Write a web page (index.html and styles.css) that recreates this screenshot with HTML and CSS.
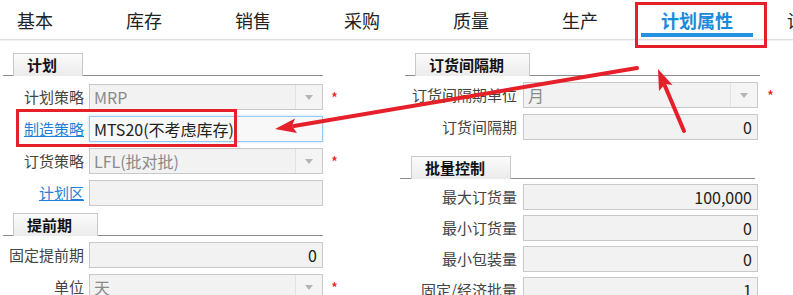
FILE: index.html
```html
<!DOCTYPE html>
<html lang="zh-CN">
<head>
  <meta charset="UTF-8">
  <title>计划属性</title>
  <link rel="stylesheet" href="styles.css">
</head>
<body>
  <div class="tabs">
    <span class="tab">基本</span>
    <span class="tab">库存</span>
    <span class="tab">销售</span>
    <span class="tab">采购</span>
    <span class="tab">质量</span>
    <span class="tab">生产</span>
    <span class="tab tab-active">计划属性</span>
    <span class="tab">设计</span>
  </div>

  <div class="main">
    <div class="col col-left">
      <div class="section">
        <div class="sec-head"><span class="sec-title">计划</span></div>
        <div class="rows rows-first">
          <div class="row">
            <span class="lbl">计划策略</span>
            <div class="field select"><span class="val">MRP</span><span class="drop"></span></div>
            <span class="req">*</span>
          </div>
          <div class="row">
            <a class="lbl link">制造策略</a>
            <div class="field focus"><span class="val">MTS20(不考虑库存)</span></div>
          </div>
          <div class="row">
            <span class="lbl">订货策略</span>
            <div class="field select"><span class="val">LFL(批对批)</span><span class="drop"></span></div>
            <span class="req">*</span>
          </div>
          <div class="row">
            <a class="lbl link">计划区</a>
            <div class="field"><span class="val"></span></div>
          </div>
        </div>
      </div>

      <div class="section section-next">
        <div class="sec-head"><span class="sec-title">提前期</span></div>
        <div class="rows">
          <div class="row">
            <span class="lbl">固定提前期</span>
            <div class="field num"><span class="val">0</span></div>
          </div>
          <div class="row">
            <span class="lbl">单位</span>
            <div class="field select"><span class="val">天</span><span class="drop"></span></div>
            <span class="req">*</span>
          </div>
        </div>
      </div>
    </div>

    <div class="col col-right">
      <div class="section">
        <div class="sec-head"><span class="sec-title">订货间隔期</span></div>
        <div class="rows">
          <div class="row">
            <span class="lbl">订货间隔期单位</span>
            <div class="field select"><span class="val">月</span><span class="drop"></span></div>
            <span class="req">*</span>
          </div>
          <div class="row">
            <span class="lbl">订货间隔期</span>
            <div class="field num"><span class="val">0</span></div>
          </div>
        </div>
      </div>

      <div class="section section-batch">
        <div class="sec-head"><span class="sec-title">批量控制</span></div>
        <div class="rows">
          <div class="row">
            <span class="lbl">最大订货量</span>
            <div class="field num"><span class="val">100,000</span></div>
          </div>
          <div class="row">
            <span class="lbl">最小订货量</span>
            <div class="field num"><span class="val">0</span></div>
          </div>
          <div class="row">
            <span class="lbl">最小包装量</span>
            <div class="field num"><span class="val">0</span></div>
          </div>
          <div class="row">
            <span class="lbl">固定/经济批量</span>
            <div class="field num"><span class="val">1</span></div>
          </div>
        </div>
      </div>
    </div>
  </div>

  <!-- annotation marks drawn over the screenshot -->
  <div class="mark mark-tab"></div>
  <div class="mark mark-field"></div>
  <svg class="arrows" width="793" height="295" viewBox="0 0 793 295">
    <line x1="637" y1="68" x2="294" y2="126" />
    <polygon points="275,129 295,118.5 292,126 297,133" />
    <line x1="684" y1="131" x2="665" y2="86" />
    <polygon points="658,69 672.5,85 665,84 659,91" />
  </svg>
</body>
</html>
```

FILE: styles.css
```css
body {
  margin: 0;
  width: 793px;
  height: 295px;
  overflow: hidden;
  position: relative;
  background: #fff;
  font-family: "Noto Sans CJK SC", sans-serif;
  color: #333;
}

/* tab strip */
.tabs {
  display: flex;
  height: 39px;
  padding-left: 17px;
  border-bottom: 1px solid #dedede;
  box-shadow: 0 1px 0 #f0f0f0;
  white-space: nowrap;
  overflow: hidden;
}

.tab {
  height: 33px;
  line-height: 40px;
  font-size: 18px;
  color: #222;
  flex-shrink: 0;
}

.tab + .tab {
  margin-left: 73px;
}

.tab.tab-active {
  margin-left: 43px;
  padding: 0 20px;
  color: #1b8ad9;
  font-weight: bold;
  border-bottom: 4px solid #2592e0;
}

.tab-active + .tab {
  margin-left: 34px;
}

/* columns */
.main {
  display: flex;
  padding-top: 12px;
}

.col-left {
  width: 320px;
  margin-left: 3px;
}

.col-right {
  width: 355px;
  margin-left: 82px;
}

.sec-head {
  border-bottom: 1px solid #8c8c8c;
  height: 23px;
  padding-left: 10px;
}

.sec-title {
  display: inline-block;
  box-sizing: border-box;
  height: 23px;
  line-height: 22px;
  padding: 0 25px 0 13px;
  border: 1px solid #c9c9c9;
  border-bottom: none;
  background: linear-gradient(#fbfbfb, #ebebeb);
  font-size: 15px;
  font-weight: bold;
  color: #111;
}

.rows {
  display: flex;
  flex-direction: column;
  gap: 5px;
  margin-top: 6px;
}

.rows-first {
  margin-top: 7px;
}

.section-next {
  margin-top: 6px;
}

.row {
  display: grid;
  align-items: center;
}

.col-left .row {
  grid-template-columns: 81px 234px auto;
  column-gap: 5px;
}

.col-right .row {
  grid-template-columns: 112px 235px auto;
  column-gap: 6px;
}

.col-right .rows {
  margin-top: 5px;
}

.section-batch {
  margin-top: 15px;
  margin-left: -5px;
  margin-right: 5px;
}

.section-batch .sec-head {
  padding-left: 11px;
}

.section-batch .row {
  grid-template-columns: 117px 235px auto;
}

.lbl {
  text-align: right;
  font-size: 15px;
  line-height: 26px;
  color: #444;
  white-space: nowrap;
}

.link {
  color: #1f7fd6;
  text-decoration: underline;
}

.field {
  display: flex;
  box-sizing: border-box;
  height: 26px;
  border: 1px solid #c9c9c9;
  background: #f2f2f2;
  font-size: 16px;
  line-height: 24px;
  color: #222;
}

.val {
  flex: 1;
  padding: 0 5px 0 4px;
  white-space: nowrap;
  overflow: hidden;
}

.num .val {
  text-align: right;
}

.select .val {
  color: #8a8a8a;
}

.drop {
  width: 26px;
  border-left: 1px solid #e2e2e2;
  background: #f4f4f4;
  display: flex;
  align-items: center;
  justify-content: center;
}

.drop::after {
  content: "";
  border-left: 4px solid transparent;
  border-right: 4px solid transparent;
  border-top: 5px solid #b4b4b4;
}

.focus {
  border-color: #98c9f0;
  background: #f8f8f8;
  box-shadow: 0 0 3px #b7dcf8;
}

.req {
  margin-left: 3px;
  color: #e8151b;
  font-size: 15px;
  line-height: 26px;
  padding-top: 2px;
}

/* red annotation overlays */
.mark {
  position: absolute;
  box-sizing: border-box;
  border: 3px solid #e5202a;
}

.mark-tab {
  left: 635px;
  top: 2px;
  width: 132px;
  height: 46px;
}

.mark-field {
  left: 16px;
  top: 109px;
  width: 221px;
  height: 38px;
}

.arrows {
  position: absolute;
  left: 0;
  top: 0;
  pointer-events: none;
}

.arrows line {
  stroke: #e5202a;
  stroke-width: 4;
  stroke-linecap: round;
}

.arrows polygon {
  fill: #e5202a;
}
```
